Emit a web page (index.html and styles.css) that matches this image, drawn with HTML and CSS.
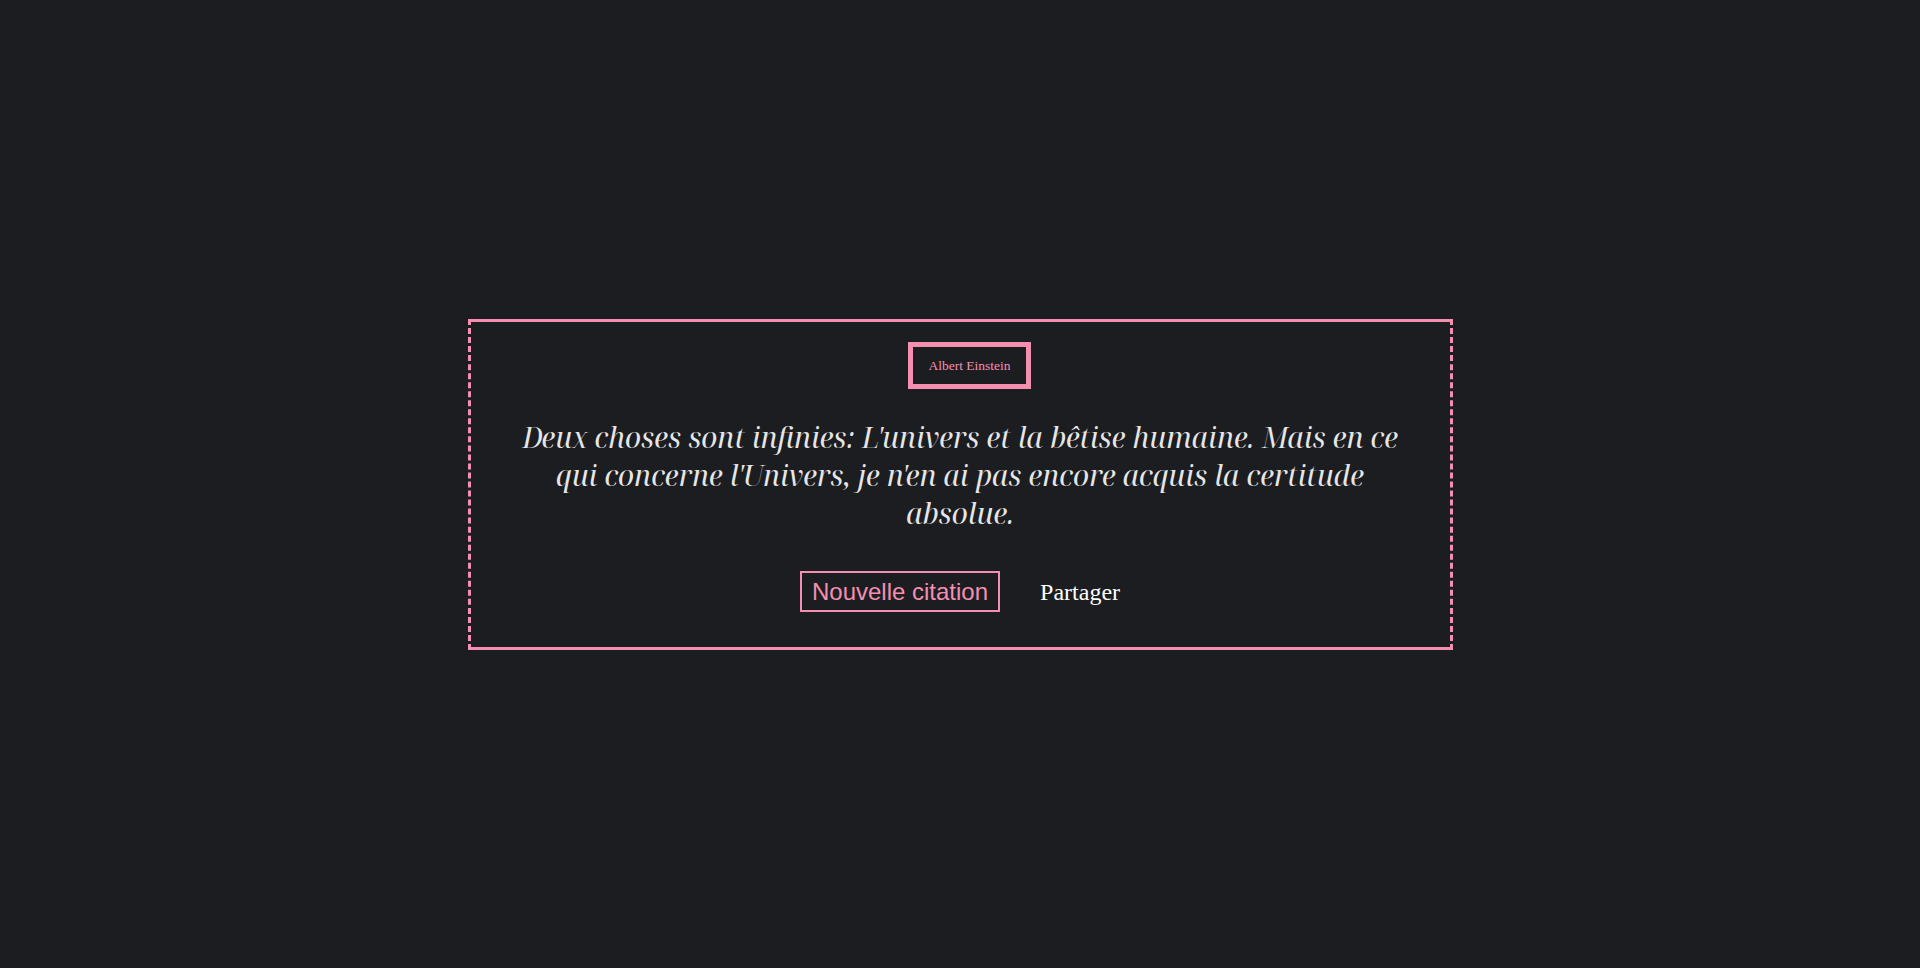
FILE: index.html
```html
<!DOCTYPE html>
<html lang="fr">
<head>
<meta charset="utf-8">
<title>Citation</title>
<link rel="stylesheet" href="styles.css">
</head>
<body>
<main class="page">
  <section class="card">
    <div class="author">Albert Einstein</div>
    <p class="quote">Deux choses sont infinies: L'univers et la bêtise humaine. Mais en ce qui concerne l'Univers, je n'en ai pas encore acquis la certitude absolue.</p>
    <div class="actions">
      <button class="btn-new" type="button">Nouvelle citation</button>
      <a class="share" href="#">Partager</a>
    </div>
  </section>
</main>
</body>
</html>
```
FILE: styles.css
```css
html, body {
  margin: 0;
  padding: 0;
  height: 100%;
}
body {
  background: #1c1d21;
  font-family: "Liberation Serif", serif;
}
.page {
  height: 968px;
  display: flex;
  align-items: center;
  justify-content: center;
}
.card {
  width: 899px;
  padding: 20px 40px 35px;
  border-top: 3px solid #f48fb1;
  border-bottom: 3px solid #f48fb1;
  border-left: 3px dashed #f48fb1;
  border-right: 3px dashed #f48fb1;
  display: flex;
  flex-direction: column;
  align-items: center;
}
.author {
  margin-left: 19px;
  border: 5px solid #f48fb1;
  padding: 11px 15px;
  font-family: "Liberation Serif", serif;
  font-size: 13.5px;
  line-height: 15px;
  color: #f48fb1;
}
.quote {
  margin: 29px 0 39px;
  font-family: "Noto Serif Display", "Noto Serif", serif;
  font-style: italic;
  font-weight: 400;
  font-size: 28.4px;
  line-height: 38px;
  text-align: center;
  color: #e6e6e6;
}
.actions {
  display: flex;
  align-items: baseline;
  gap: 40px;
}
.btn-new {
  background: transparent;
  border: 2px solid #f48fb1;
  color: #f48fb1;
  font-family: "Liberation Sans", Arial, sans-serif;
  font-size: 24px;
  line-height: 27px;
  padding: 5px 10px;
  margin: 0;
  cursor: pointer;
}
.share {
  font-family: "Liberation Serif", serif;
  font-size: 24px;
  color: #ffffff;
  text-decoration: none;
}
```
